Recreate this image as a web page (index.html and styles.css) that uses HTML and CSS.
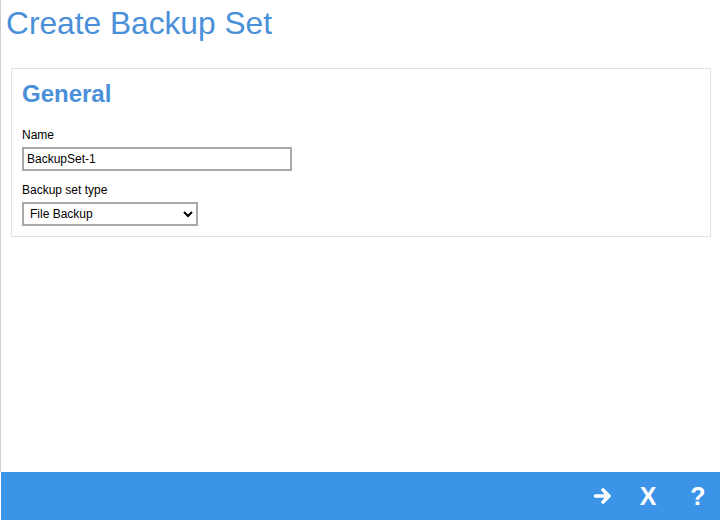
FILE: index.html
```html
<!DOCTYPE html>
<html lang="en">
<head>
<meta charset="utf-8">
<title>Create Backup Set</title>
<link rel="stylesheet" href="styles.css">
</head>
<body>
<div class="app">
  <main class="main">
    <h1 class="title">Create Backup Set</h1>
    <section class="panel">
      <h2 class="panel-title">General</h2>
      <div class="field">
        <label class="label" for="name">Name</label>
        <input class="text-input" id="name" type="text" value="BackupSet-1">
      </div>
      <div class="field">
        <label class="label" for="type">Backup set type</label>
        <select class="select" id="type">
          <option>File Backup</option>
        </select>
      </div>
    </section>
  </main>
  <footer class="footer">
    <span class="btn btn-next" title="Next">
      <svg width="20" height="20" viewBox="0 0 20 20" aria-hidden="true">
        <path d="M2.5 10H15.5M10 4l6 6-6 6" fill="none" stroke="#fff" stroke-width="3.6" stroke-linecap="round" stroke-linejoin="round"/>
      </svg>
    </span>
    <span class="btn btn-close" title="Cancel">X</span>
    <span class="btn btn-help" title="Help">?</span>
  </footer>
</div>
</body>
</html>
```
FILE: styles.css
```css
html, body {
  margin: 0;
  padding: 0;
  background: #fff;
}

body {
  font-family: "Liberation Sans", Arial, sans-serif;
  color: #000;
}

.app {
  width: 720px;
  height: 520px;
  box-sizing: border-box;
  display: flex;
  flex-direction: column;
}

.main {
  flex: 1;
  border-left: 1px solid #cfcfcf;
  padding: 5px 9px 0 5px;
}

.title {
  margin: 0;
  font-size: 31.7px;
  line-height: 36px;
  font-weight: normal;
  color: #4a90d9;
}

.panel {
  margin: 27px 0 0 5px;
  border: 1px solid #e2e2e2;
  padding: 11px 10px 10px 10px;
}

.panel-title {
  margin: 0 0 20px 0;
  font-size: 24px;
  line-height: 28px;
  font-weight: bold;
  color: #4a90d9;
}

.field {
  display: flex;
  flex-direction: column;
  align-items: flex-start;
}

.field + .field {
  margin-top: 12px;
}

.label {
  font-size: 12px;
  line-height: 14px;
  margin-bottom: 5px;
}

.text-input {
  box-sizing: border-box;
  width: 270px;
  height: 24px;
  margin: 0;
  border: 2px solid #a9a9a9;
  padding: 0 3px;
  font-family: "Liberation Sans", Arial, sans-serif;
  font-size: 12px;
  color: #000;
  background: #fff;
  outline: none;
}

.select {
  box-sizing: border-box;
  width: 176px;
  height: 24px;
  margin: 0;
  border: 2px solid #a9a9a9;
  border-radius: 0;
  padding: 0 2px;
  font-family: "Liberation Sans", Arial, sans-serif;
  font-size: 12px;
  color: #000;
  background-color: #fff;
}

.footer {
  height: 48px;
  margin-left: 1px;
  background: #3c94e9;
  display: flex;
  align-items: center;
  justify-content: flex-end;
  padding-right: 15px;
}

.btn {
  display: flex;
  align-items: center;
  justify-content: center;
  color: #fff;
  font-family: "Liberation Sans", Arial, sans-serif;
  font-weight: bold;
  font-size: 25px;
  line-height: 1;
  height: 24px;
}

.btn-next {
  width: 22px;
  margin-right: 25px;
}

.btn-close {
  width: 18px;
  margin-right: 34px;
}

.btn-help {
  width: 14px;
}
```
